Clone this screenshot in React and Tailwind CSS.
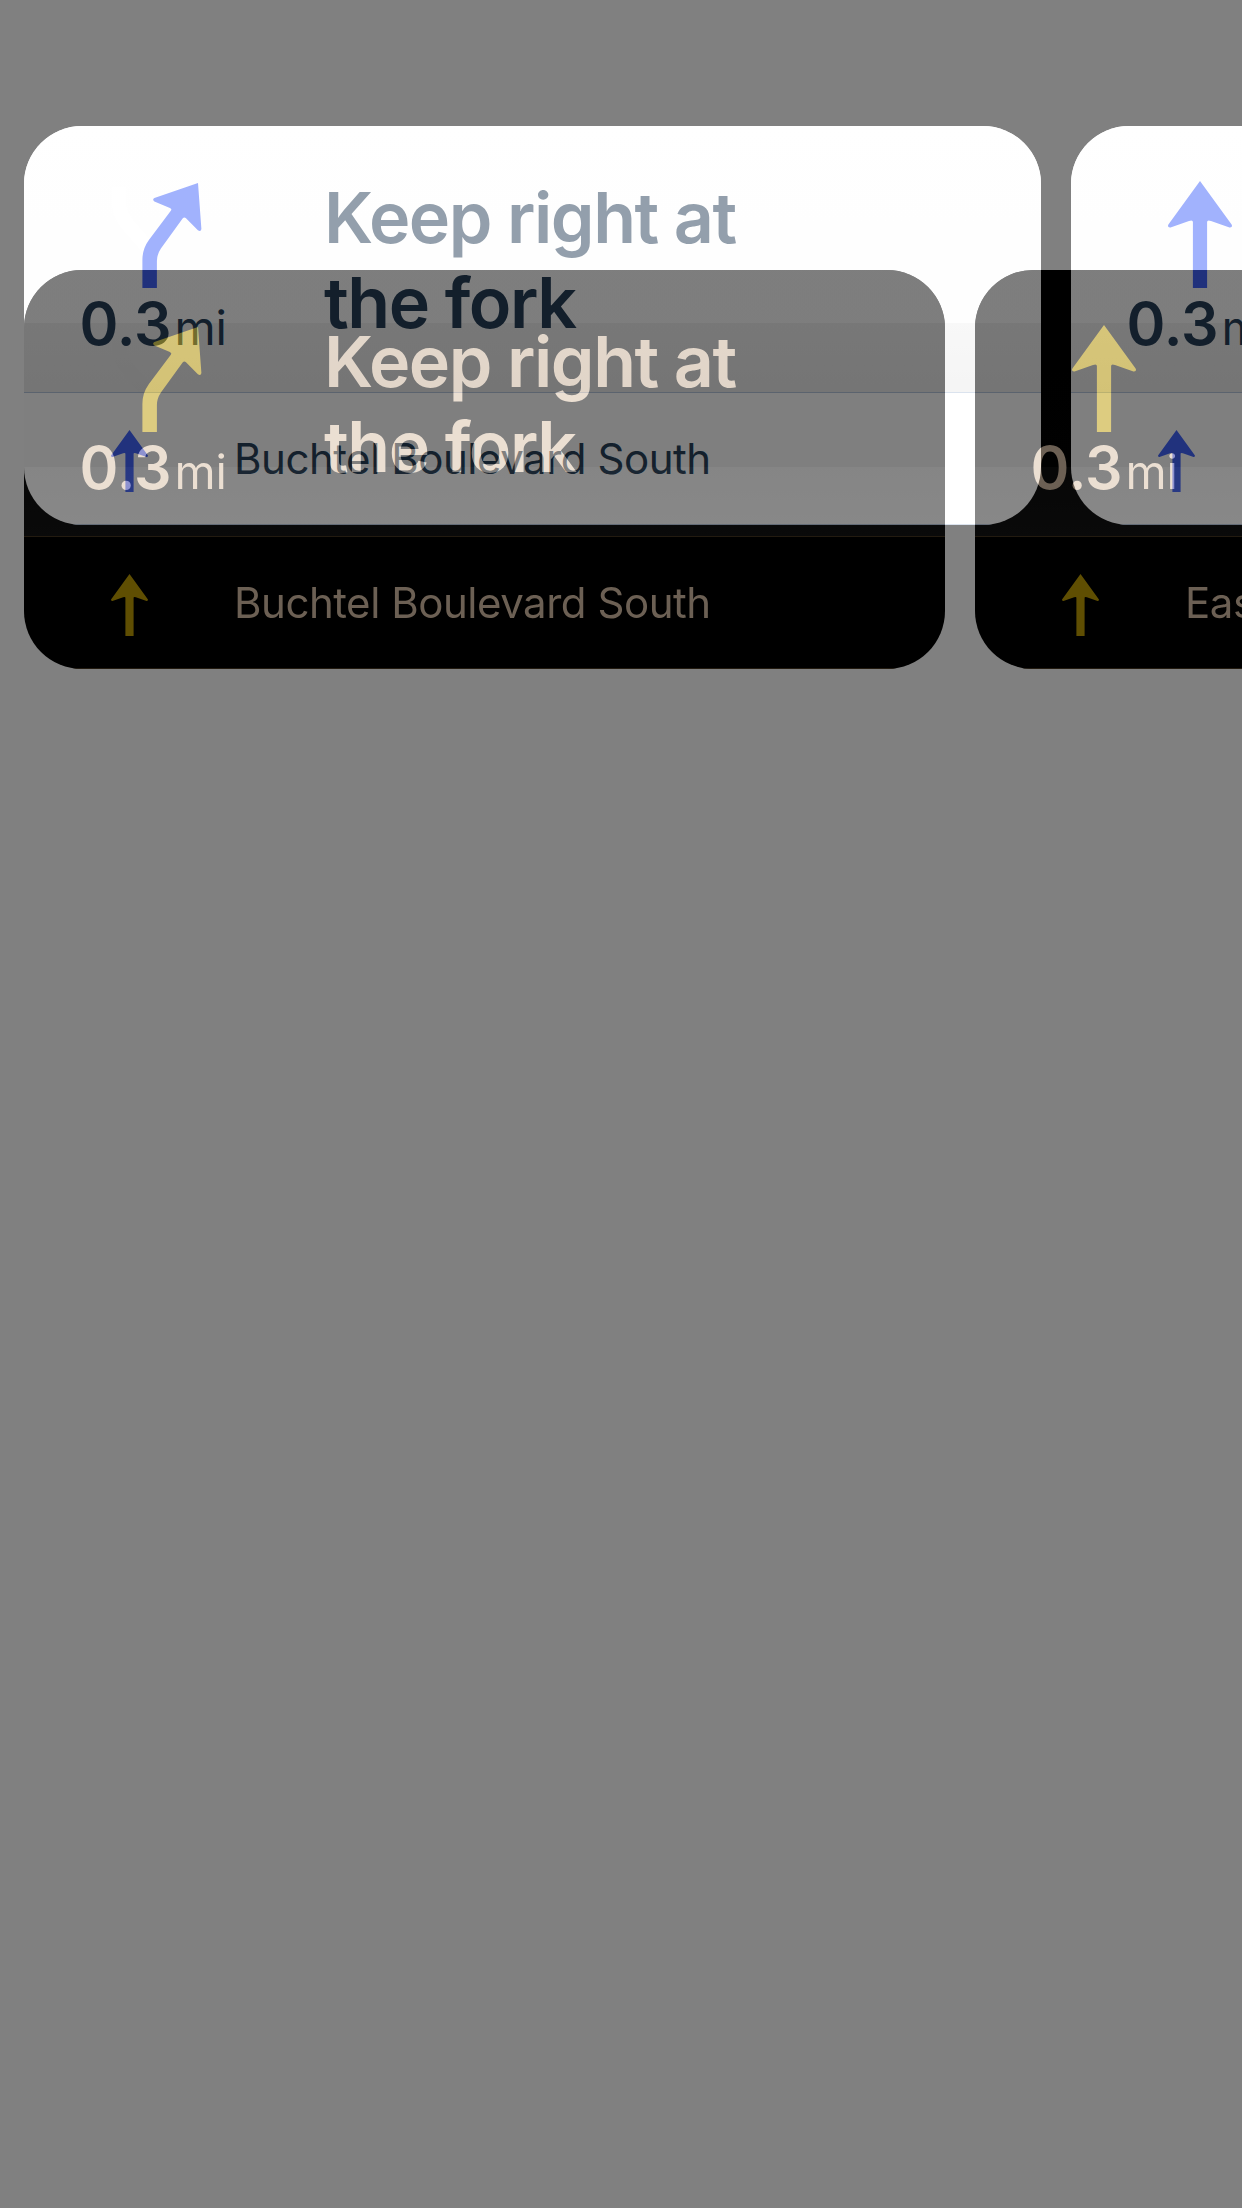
const Arrow = ({ className }) => (
  <svg className={className} viewBox="0 0 64 107" fill="#4264fb">
    <path d="M32 0 63.6 43.5Q65 46.7 61.5 46.4L43 40Q39.1 38.6 39.1 41V107H24.9V41Q24.9 38.6 21 40L2.500 46.400Q-1 46.700 .4 43.500Z" />
  </svg>
);

const ForkArrow = ({ className }) => (
  <svg className={className} viewBox="0 0 60 105" fill="none">
    <path d="M-23 4V22Q-22 32 -14 42L7 66" stroke="#fff" strokeWidth="14" />
    <path fill="#4264fb" d="M45.600 0 49 46Q48.500 49 45.500 47.300L33.600 35.200Q31.800 33.600 30.200 35.600L19 51 8.500 65.500Q4.500 71.500 4.500 78V105H-10V77Q-10 66 -3.500 57L18.600 27.500Q19.700 26 17.500 25L2 18.400Q-.5 16.500 2 15Z" transform="translate(10.400 0)" />
  </svg>
);

function Card({ icon, title, next, className }) {
  return (
    <section className={`flex h-[399px] shrink-0 flex-col overflow-hidden rounded-[58px] bg-white text-[#273f58] ${className}`}>
      <div className="flex h-[197px] shrink-0 bg-linear-to-b from-white to-[#fdfdfd]">
        <div className="flex w-[258px] shrink-0 flex-col items-center">
          <div className="flex h-[162px] w-full shrink-0 items-end justify-center pb-3">
            {icon}
          </div>
          <div className="mt-[4px] flex h-[64px] shrink-0 items-baseline whitespace-nowrap leading-[64px]">
            <span className="text-[59px] font-semibold">0.3</span>
            <span className="ml-[3px] text-[47px] tracking-[-0.3px]">mi</span>
          </div>
        </div>
        <h2 className="ml-[42px] mt-[49px] w-[440px] shrink-0 text-[70px] font-semibold leading-[85px] tracking-[-1.5px]">{title}</h2>
      </div>
      <div className="-z-10 h-[69px] shrink-0 bg-linear-to-b from-[#f1f1f1] to-[#ebebeb]" />
      <div className="flex h-[133px] shrink-0 items-center border-y border-[#b8c8de]">
        <Arrow className="ml-[86.5px] mt-[4px] h-[62px] w-[37px] shrink-0" />
        <span className="ml-[86.5px] whitespace-nowrap text-[42px] tracking-[-0.47px]">{next}</span>
      </div>
    </section>
  );
}

function Carousel({ cardClass, className }) {
  return (
    <div className={`flex gap-[30px] pl-6 ${className}`}>
      <Card className={cardClass} icon={<ForkArrow className="mb-[-12px] mr-[-38px] h-[105px] w-[60px] overflow-visible" />} title="Keep right at the fork" next="Buchtel Boulevard South" />
      <Card className={cardClass} icon={<Arrow className="mb-[-12px] h-[107px] w-[64px]" />} title="East Evans Avenue" next="East Evans Avenue" />
    </div>
  );
}

export default function App() {
  return (
    <main className="relative h-[2208px] w-[1242px] overflow-hidden bg-black font-['Inter',sans-serif]">
      <Carousel className="pt-[126px]" cardClass="isolate w-[1017px]" />
      <div className="absolute inset-0 overflow-hidden bg-black opacity-50 invert">
        <Carousel className="pt-[270px]" cardClass="isolate w-[921px]" />
      </div>
    </main>
  );
}
